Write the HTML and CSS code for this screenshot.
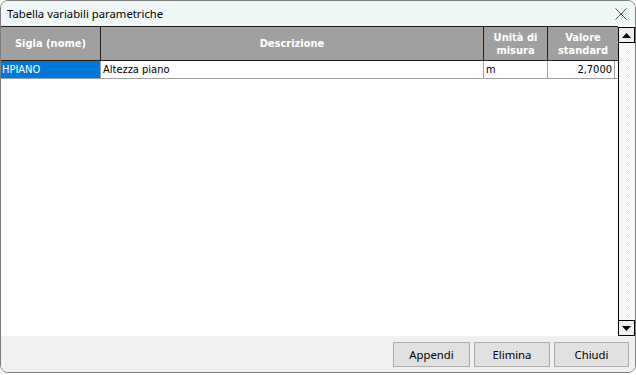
FILE: index.html
```html
<!DOCTYPE html>
<html>
<head>
<meta charset="utf-8">
<link rel="stylesheet" href="styles.css">
</head>
<body>
<div class="window">
  <div class="titlebar">
    <span class="title">Tabella variabili parametriche</span>
    <svg class="close" width="12" height="12" viewBox="0 0 12 12"><path d="M0.5 0.5 L11.5 11.5 M11.5 0.5 L0.5 11.5" stroke="#3a3a3a" stroke-width="0.9" fill="none"/></svg>
  </div>
  <div class="content">
    <div class="grid">
      <div class="head">
        <div class="hc">Sigla (nome)</div>
        <div class="hc">Descrizione</div>
        <div class="hc">Unità di<br>misura</div>
        <div class="hc last">Valore<br>standard</div>
      </div>
      <div class="row">
        <div class="dc sel">HPIANO</div>
        <div class="dc">Altezza piano</div>
        <div class="dc">m</div>
        <div class="dc num">2,7000</div>
      </div>
    </div>
    <div class="scrollbar">
      <div class="sbtn"><svg width="9" height="5" viewBox="0 0 9 5"><path d="M4.5 0 L9 5 L0 5 Z" fill="#000"/></svg></div>
      <div class="track"></div>
      <div class="sbtn"><svg width="9" height="5" viewBox="0 0 9 5"><path d="M0 0 L9 0 L4.5 5 Z" fill="#000"/></svg></div>
    </div>
  </div>
  <div class="footer">
    <button class="btn b1">Appendi</button>
    <button class="btn b2">Elimina</button>
    <button class="btn b3">Chiudi</button>
  </div>
</div>
</body>
</html>
```
FILE: styles.css
```css
* { box-sizing: border-box; }
html, body { margin: 0; padding: 0; background: #ffffff; }
body { width: 636px; height: 375px; overflow: hidden; }

.window {
  width: 636px;
  height: 373px;
  border: 1px solid #7c7c7c;
  border-radius: 8px;
  overflow: hidden;
  display: flex;
  flex-direction: column;
  background: #ffffff;
}

.titlebar {
  height: 25px;
  flex: none;
  background: #eff7f7;
  display: flex;
  align-items: center;
  justify-content: space-between;
  padding: 0 7px 0 6px;
}
.title {
  font-family: "Noto Sans", "Open Sans", sans-serif;
  font-size: 11.3px;
  color: #000;
  margin-top: -1px;
}
.close { margin-right: 1px; margin-top: 1px; }

.content {
  height: 310px;
  flex: none;
  display: flex;
  background: #ffffff;
}

.grid {
  width: 617px;
  flex: none;
  display: flex;
  flex-direction: column;
}

.head {
  display: grid;
  grid-template-columns: 100px 383px 64px 70px;
  height: 35px;
  border-top: 1px solid #1e1e1e;
  border-bottom: 1px solid #1e1e1e;
  background: #a0a0a0;
}
.hc {
  border-right: 1px solid #1e1e1e;
  color: #ffffff;
  font-family: "DejaVu Sans Condensed", "DejaVu Sans", sans-serif;
  font-weight: bold;
  font-size: 11px;
  line-height: 13px;
  display: flex;
  align-items: center;
  justify-content: center;
  text-align: center;
}
.hc.last { border-right: none; }

.row {
  display: grid;
  grid-template-columns: 100px 383px 64px 70px;
  height: 18px;
  border-bottom: 1px solid #a0a0a0;
}
.dc {
  border-right: 1px solid #a0a0a0;
  font-family: "DejaVu Sans Condensed", "DejaVu Sans", sans-serif;
  font-size: 11px;
  line-height: 17px;
  color: #000;
  padding-left: 2px;
  white-space: nowrap;
}
.dc.sel { background: #0078d7; color: #ffffff; padding-left: 1px; }
.dc.num { text-align: right; padding-right: 2px; margin-right: 3px; }

.scrollbar {
  width: 17px;
  flex: none;
  margin-top: 1px;
  display: flex;
  flex-direction: column;
  border-left: 1px solid #000;
  background: repeating-conic-gradient(#f0f0f0 0 25%, #ffffff 0 50%) 0 0 / 2px 2px;
}
.sbtn {
  height: 16px;
  flex: none;
  border: 1px solid #000;
  border-left: none;
  background: #f0f0f0;
  display: flex;
  align-items: center;
  justify-content: center;
}
.track { flex: 1; }

.footer {
  flex: 1;
  background: #f0f0f0;
  display: flex;
  align-items: flex-start;
  justify-content: flex-end;
  padding: 6px 6px 0 0;
  gap: 4px;
}
.btn {
  height: 25px;
  border: 1px solid #adadad;
  background: #e1e1e1;
  font-family: "Noto Sans", "Open Sans", sans-serif;
  font-size: 11.3px;
  color: #000;
  padding: 0;
  margin: 0;
}
.b1 { width: 77px; }
.b2 { width: 76px; }
.b3 { width: 75px; }
```
